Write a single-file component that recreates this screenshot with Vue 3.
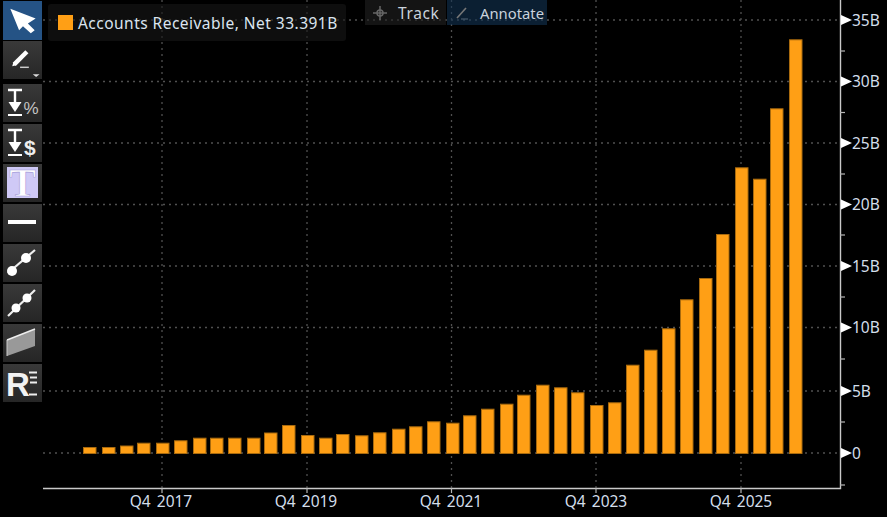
<script setup>
const lefts = [83,102,120,137,156,174,193,210,228,247,264,282,301,319,336,355,373,392,409,427,446,463,481,500,517,536,554,571,590,608,626,644,662,680,699,716,735,753,770,789]
const tops = [447,447,445.5,442.7,442.7,440.3,437.7,437.7,437.7,437.7,432.5,425,435,437.7,434,435.3,432.3,428.7,426.3,421.3,422.7,415.3,408.7,403.7,394.7,384.7,387.3,392.3,405,402.3,364.7,349.7,328.3,299.3,278,234,167.3,178.7,108.3,39.3]
const baseY = 453.5
const bars = lefts.map((x, i) => ({ x: x + 0.5, y: tops[i] + 0.5, h: baseY - tops[i] - 0.5 }))
const gridY = [20, 81.5, 143, 204.5, 266, 327.5, 391, 453]
const gridX = [162, 307, 451.5, 596, 741]
const yLabels = [['35B', 20], ['30B', 81.5], ['25B', 143], ['20B', 204.5], ['15B', 266], ['10B', 327.5], ['5B', 391], ['0', 453]]
const minor = [51, 112.5, 174, 235, 297, 359, 422, 485]
const xLabels = [['Q4 2017', 161], ['Q4 2019', 306], ['Q4 2021', 451], ['Q4 2023', 596], ['Q4 2025', 741]]
</script>

<template>
  <div class="page">
    <aside class="tools">
      <div class="btn active">
        <svg viewBox="0 0 39 39"><polygon points="7,8 33,18 25,23 32,30 28,33 20,26 16,30" fill="#fff" /></svg>
      </div>
      <div class="btn">
        <svg viewBox="0 0 39 39">
          <path d="M11 24 L24 11" stroke="#fff" stroke-width="4.5" />
          <path d="M9 26 L10 22 L13 25 Z" fill="#fff" />
          <path d="M17 27 H26" stroke="#ccc" stroke-width="1.5" />
          <polygon points="30,34 37,34 33.5,37" fill="#ddd" />
        </svg>
      </div>
      <div class="btn second-group">
        <svg viewBox="0 0 39 38">
          <path d="M5 6 H19 M12 6 V19" stroke="#fff" stroke-width="2.4" fill="none" />
          <polygon points="5.5,18 18.5,18 12,28" fill="#fff" />
          <path d="M5 31 H19" stroke="#fff" stroke-width="2" />
          <text x="20.5" y="30" class="sign">%</text>
        </svg>
      </div>
      <div class="btn">
        <svg viewBox="0 0 39 38">
          <path d="M5 6 H19 M12 6 V19" stroke="#fff" stroke-width="2.4" fill="none" />
          <polygon points="5.5,18 18.5,18 12,28" fill="#fff" />
          <path d="M5 31 H19" stroke="#fff" stroke-width="2" />
          <text x="21" y="31" class="sign bold">$</text>
        </svg>
      </div>
      <div class="btn">
        <svg class="spill" viewBox="0 0 39 38">
          <rect x="4" y="3" width="31" height="31" fill="#cfc9f6" />
          <text x="19.5" y="32" text-anchor="middle" class="serif">T</text>
        </svg>
      </div>
      <div class="btn">
        <svg viewBox="0 0 39 38"><path d="M5 18 H33" stroke="#fff" stroke-width="4" /></svg>
      </div>
      <div class="btn">
        <svg viewBox="0 0 39 38">
          <path d="M5 29 L32 6" stroke="#eee" stroke-width="2.2" />
          <circle cx="9" cy="27" r="5" fill="#fff" />
          <circle cx="23" cy="14" r="5" fill="#fff" />
        </svg>
      </div>
      <div class="btn">
        <svg viewBox="0 0 39 38">
          <path d="M5 32 L32 6" stroke="#eee" stroke-width="2.2" />
          <circle cx="13" cy="24" r="4.5" fill="#fff" />
          <circle cx="24" cy="14" r="4.5" fill="#fff" />
        </svg>
      </div>
      <div class="btn">
        <svg viewBox="0 0 39 38">
          <polygon points="4,16 32,5 32,22 4,32" fill="#999" />
          <path d="M4 16 L32 5" stroke="#eee" stroke-width="1.5" />
          <path d="M4 16 V32" stroke="#ccc" stroke-width="1" />
        </svg>
      </div>
      <div class="btn">
        <svg viewBox="0 0 39 38">
          <text x="3" y="32" class="rlogo">R</text>
          <path d="M26 8.5 H34 M27 13.5 H34 M27 18.5 H34 M26 30.5 H34" stroke="#eee" stroke-width="1.8" />
        </svg>
      </div>
    </aside>

    <main class="chart">
      <svg class="plot" viewBox="43 0 844 517" width="844" height="517">
        <g class="grid">
          <line v-for="y in gridY" :key="'h' + y" x1="43" :y1="y" x2="840" :y2="y" />
          <line v-for="x in gridX" :key="'v' + x" :x1="x" y1="0" :x2="x" y2="488" />
        </g>
        <rect v-for="b in bars" :key="b.x" class="bar" :x="b.x" :y="b.y" width="12.5" :height="b.h" />
        <path class="axis" d="M43 488.5 H840.5 V0" />
        <line v-for="x in gridX" :key="'t' + x" class="tick" :x1="x" y1="488" :x2="x" y2="493" />
        <line v-for="y in minor" :key="'m' + y" class="tick" x1="840" :y1="y" x2="845" :y2="y" />
        <polygon v-for="l in yLabels" :key="'p' + l[0]" class="flag" :points="`841,${l[1] - 5} 852,${l[1]} 841,${l[1] + 5}`" />
        <text v-for="l in yLabels" :key="l[0]" class="label" x="852" :y="l[1] + 5.5">{{ l[0] }}</text>
        <text v-for="l in xLabels" :key="l[0]" class="label wide" :x="l[1]" y="506.5" text-anchor="middle">{{ l[0] }}</text>
      </svg>

      <div class="legend">
        <span class="swatch"></span>
        <span>Accounts Receivable, Net 33.391B</span>
      </div>

      <div class="modes">
        <div class="mode track">
          <svg viewBox="0 0 16 16" width="16" height="16">
            <path d="M8 1 V15 M1 8 H15" stroke="#666" stroke-width="1.5" />
            <circle cx="8" cy="8" r="3" fill="none" stroke="#666" stroke-width="1.5" />
          </svg>
          <span>Track</span>
        </div>
        <div class="mode annotate">
          <svg viewBox="0 0 16 16" width="16" height="16">
            <path d="M3 13 L12 3" stroke="#777" stroke-width="1.6" />
            <path d="M7 14 H14" stroke="#567" stroke-width="1" />
          </svg>
          <span>Annotate</span>
        </div>
      </div>
    </main>
  </div>
</template>

<style>
html, body { margin: 0; background: #000; }
</style>

<style scoped>
.page {
  display: flex;
  width: 887px;
  height: 517px;
  overflow: hidden;
  background: #000;
  font-family: "Noto Sans", "Liberation Sans", sans-serif;
}
.tools {
  width: 43px;
  box-sizing: border-box;
  padding: 1px 1px 0 3px;
  display: flex;
  flex-direction: column;
  gap: 2px;
  flex: none;
}
.btn {
  width: 39px;
  height: 38px;
  background: linear-gradient(#393939, #262626);
  flex: none;
}
.btn svg { display: block; width: 39px; height: 38px; }
.btn svg.spill { overflow: visible; }
.btn.active { background: #255385; height: 39px; margin-bottom: -1px; }
.btn.second-group { margin-top: 3px; }
.sign { font: 400 17px "Liberation Sans", sans-serif; fill: #c4c4c4; }
.sign.bold { font-weight: 700; font-size: 21px; fill: #eee; }
.serif { font: 700 40px "Liberation Serif", serif; fill: #fff; stroke: #a49cd8; stroke-width: .6; }
.rlogo { font: 700 33px "Liberation Sans", sans-serif; fill: #f2f2f2; }

.chart { position: relative; flex: 1; }
.plot { display: block; }
.grid line { stroke: #505050; stroke-width: 1.3; stroke-dasharray: 2 4; }
.bar { fill: #ff9f15; stroke: #a86a0e; stroke-width: 1; }
.axis { fill: none; stroke: #c9c9c9; stroke-width: 1.4; }
.tick { stroke: #b5b5b5; stroke-width: 1.2; }
.flag { fill: #fff; }
.label { font-size: 15.5px; fill: #d3deea; font-family: "Noto Sans", "Liberation Sans", sans-serif; }
.label.wide { word-spacing: 2px; }

.legend {
  position: absolute;
  left: 5px;
  top: 4px;
  width: 298px;
  height: 37px;
  box-sizing: border-box;
  padding-left: 10px;
  display: flex;
  align-items: center;
  gap: 5px;
  background: rgba(24, 24, 24, .6);
  border-radius: 3px;
  color: #dbe5f0;
  font-size: 15.5px;
  letter-spacing: .47px;
}
.swatch { width: 15px; height: 15px; background: #ff9f15; flex: none; }

.modes {
  position: absolute;
  left: 322px;
  top: 0;
  display: flex;
  gap: 1px;
}
.mode {
  height: 25px;
  display: flex;
  align-items: center;
  box-sizing: border-box;
  color: #c9d2dc;
  font-size: 15.5px;
}
.track { width: 81px; padding-left: 7px; gap: 10px; background: rgba(34, 34, 34, .6); letter-spacing: .6px; }
.annotate { width: 100px; padding-left: 7px; gap: 10px; background: rgba(18, 52, 84, .6); font-size: 14.8px; }
</style>
